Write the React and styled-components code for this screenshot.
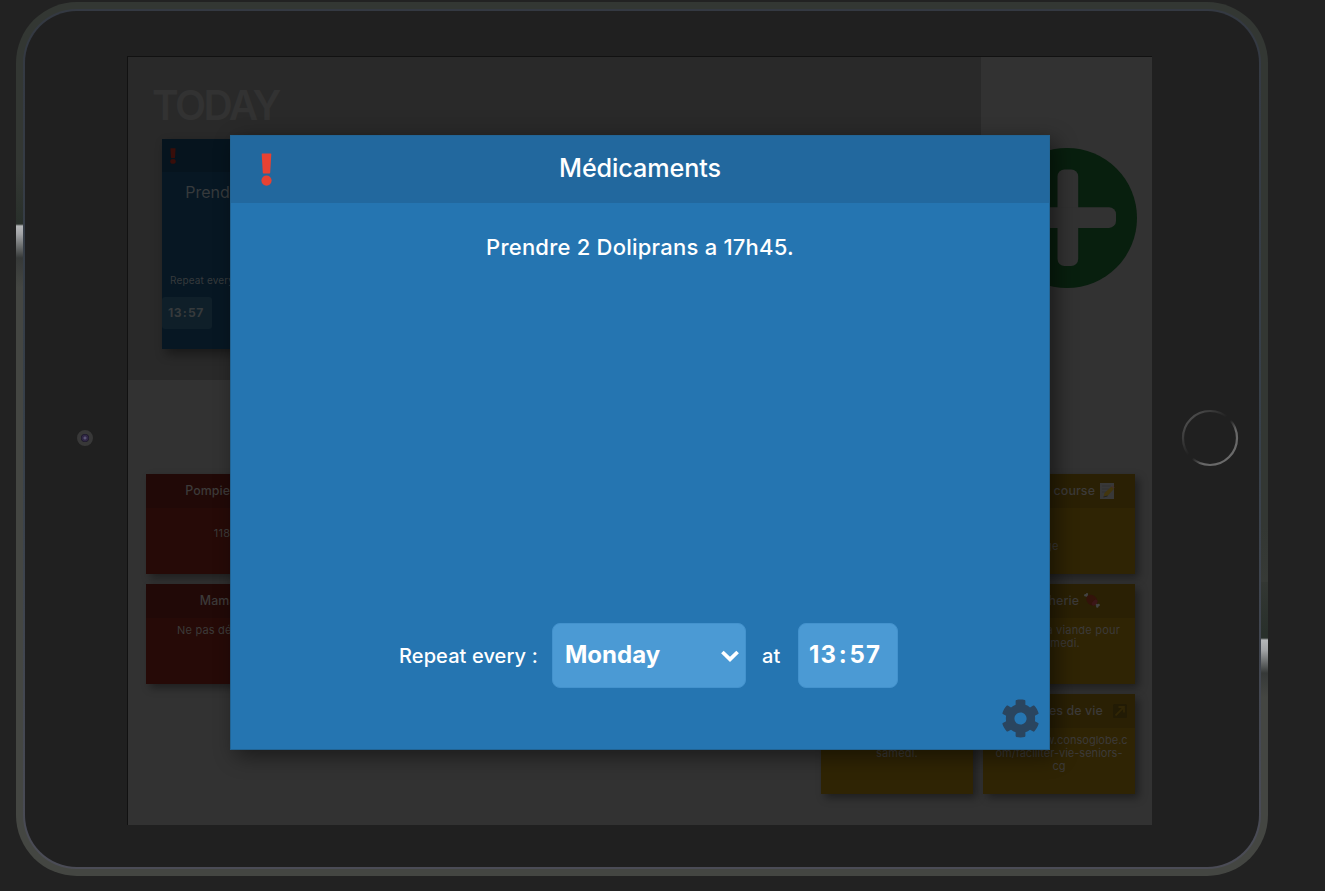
import React from "react";
import styled, { createGlobalStyle } from "styled-components";
import { FaCog } from "react-icons/fa";

const GlobalStyle = createGlobalStyle`
  * { box-sizing: border-box; }
  body {
    margin: 0;
    background: #222;
    font-family: Inter, "Liberation Sans", sans-serif;
    overflow: hidden;
  }
`;

const Page = styled.main`
  width: 1325px;
  height: 891px;
  padding: 2px 0 0 16px;
  background: #222;
`;

const Metal = styled.div`
  width: 1252px;
  height: 874px;
  padding: 7px;
  border-radius: 61px;
  background: linear-gradient(180deg, #333733 0%, #333733 60%, #444642 90%);
  position: relative;

  &::before,
  &::after {
    content: "";
    position: absolute;
    width: 7px;
  }
  &::before {
    left: 0;
    top: 170px;
    height: 620px;
    background: linear-gradient(180deg, #333733 0, #29302b 50px, #29302b 52px, #b5b7b9 54px, #a2a4a6 62px, #363938 86px, #444642 115px, #444642 100%);
  }
  &::after {
    right: 0;
    top: 580px;
    height: 210px;
    background: linear-gradient(180deg, #333733 0, #29302b 50px, #29302b 56px, #b5b7b9 58px, #a2a4a6 68px, #363938 91px, #444642 115px, #444642 100%);
  }
`;

const Bezel = styled.div`
  width: 1238px;
  height: 860px;
  border-radius: 54px;
  padding: 2px;
  background: linear-gradient(180deg, #343942 0%, #37404a 50%, #4b4c56 100%);
`;

const Glass = styled.div`
  width: 1234px;
  height: 856px;
  border-radius: 52px;
  background: #202020;
  display: grid;
  grid-template-columns: 102px 1025px 107px;
  padding-top: 45px;
  align-items: start;
`;

const CameraColumn = styled.div`
  height: 769px;
  padding-bottom: 6px;
  display: flex;
  align-items: center;
  justify-content: center;
  padding-left: 18px;
`;

const Camera = styled.div`
  width: 16px;
  height: 16px;
  border-radius: 50%;
  border: 4px solid #383838;
  background: radial-gradient(circle, #5a5475 0 0.8px, #302745 2px 3px, #171425 4px);
`;

const HomeColumn = styled(CameraColumn)`
  padding-left: 9px;
`;

const Screen = styled.div`
  position: relative;
  width: 1025px;
  height: 769px;
  border-top: 1px solid #111;
  border-left: 1px solid #111;
  background: #323232;
`;

const TopArea = styled.div`
  display: grid;
  grid-template-columns: 853px 171px;
  height: 323px;
`;

const TodayPanel = styled.section`
  background: #292929;
  padding: 25px 0 0 24px;
`;

const TodayTitle = styled.h1`
  margin: 0 0 9px;
  font-size: 40.5px;
  line-height: 48px;
  font-weight: 600;
  letter-spacing: -2.5px;
  color: #323232;
`;

const TodayNote = styled.article`
  width: 210px;
  height: 210px;
  margin-left: 10px;
  background: #071723;
  color: #363a3c;
  box-shadow: 4px 5px 10px rgba(0, 0, 0, 0.4);
`;

const TodayNoteHead = styled.div`
  height: 33px;
  padding: 9px 0 0 8px;
  background: #06141e;
`;

const TodayNoteText = styled.p`
  margin: 0;
  height: 92px;
  padding-top: 10px;
  text-align: center;
  font-size: 16px;
  line-height: 20px;
`;

const TodayRepeat = styled.div`
  height: 33px;
  padding: 10px 0 0 8px;
  font-size: 10px;
  letter-spacing: 0.15px;
  white-space: nowrap;
`;

const TodayTime = styled.div`
  width: 50px;
  height: 32px;
  border-radius: 3px;
  background: #0f1f29;
  display: flex;
  align-items: center;
  padding: 0 0 1px 6px;
  font-size: 12.2px;
  font-weight: 700;
  letter-spacing: 0.4px;
`;

const Colon = styled.span`
  padding: 0 0.07em;
`;

const AddArea = styled.aside`
  padding: 91px 0 0 16px;
`;

const Board = styled.section`
  display: flex;
  justify-content: space-between;
  padding: 94px 17px 0 18px;
`;

const Side = styled.div`
  display: flex;
  gap: 10px;
`;

const Stack = styled.div`
  display: grid;
  gap: 10px;
  align-self: ${(p) => (p.$end ? "flex-end" : "flex-start")};
`;

const tones = {
  red: { body: "#260a07", head: "#210907" },
  yellow: { body: "#2f2404", head: "#2a2004" },
};

const Note = styled.article`
  width: 152px;
  height: 100px;
  background: ${(p) => tones[p.$tone].body};
  box-shadow: 4px 4px 8px rgba(0, 0, 0, 0.38);
  color: #3c3a39;
  overflow: hidden;
`;

const NoteHead = styled.h2`
  margin: 0;
  height: 34px;
  padding-bottom: 1px;
  padding-right: ${(p) => p.$inset || 0}px;
  display: flex;
  align-items: center;
  justify-content: center;
  gap: ${(p) => p.$gap || 5}px;
  background: ${(p) => tones[p.$tone].head};
  font-size: 12.4px;
  font-weight: 500;
  letter-spacing: 0.1px;
  white-space: nowrap;
`;

const NoteText = styled.p`
  margin: 0;
  padding: ${(p) => 6 + (p.$skip || 0) * 13}px ${(p) => p.$right || 6}px 0 6px;
  text-align: center;
  font-size: 11px;
  line-height: 13px;
  letter-spacing: ${(p) => (p.$tight ? 0.02 : 0.2)}px;
  white-space: pre;
`;

const Dialog = styled.div`
  position: absolute;
  top: 78px;
  left: 102px;
  width: 820px;
  height: 615px;
  display: flex;
  flex-direction: column;
  border: 1px solid #226494;
  background: #2575b1;
  color: #fff;
  box-shadow: 6px 6px 20px rgba(0, 0, 0, 0.48);
`;

const DialogHead = styled.header`
  flex: 0 0 67px;
  display: grid;
  grid-template-columns: 70px 1fr 70px;
  align-items: center;
  background: #22689e;
`;

const BangSlot = styled.div`
  display: flex;
  padding-left: 30px;
`;

const DialogTitle = styled.h2`
  margin: 0;
  padding-bottom: 3px;
  text-align: center;
  font-size: 25.2px;
  line-height: 30px;
  font-weight: 450;
  letter-spacing: -0.1px;
`;

const DialogText = styled.p`
  margin: 0;
  padding-top: 30px;
  flex: 1;
  text-align: center;
  font-size: 22px;
  font-weight: 450;
  line-height: 28px;
  letter-spacing: 0.23px;
`;

const RepeatRow = styled.div`
  display: flex;
  align-items: center;
  height: 65px;
  padding-left: 168px;
  font-size: 20px;
  font-weight: 450;
  letter-spacing: 0.1px;
  white-space: nowrap;
`;

const RepeatLabel = styled.span`
  width: ${(p) => p.$width}px;
  padding: 1px 0 0 ${(p) => p.$left || 0}px;
`;

const Field = styled.div`
  width: ${(p) => p.$width}px;
  height: 65px;
  padding: 0 5px 2px ${(p) => p.$left}px;
  border: 1px solid #4392cd;
  border-radius: 8px;
  display: flex;
  align-items: center;
  justify-content: ${(p) => (p.$spread ? "space-between" : "flex-start")};
  background: #4b9ad4;
  font-size: 24px;
  font-weight: 700;
  letter-spacing: ${(p) => p.$spacing || 0}px;
`;

const DialogFoot = styled.footer`
  height: 61px;
  display: flex;
  justify-content: flex-end;
  padding: 11px 9px 0 0;
  color: #2a455f;
`;

const Bang = ({ width, height, color }) => (
  <svg width={width} height={height} viewBox="0 0 11 33" preserveAspectRatio="none" fill={color}>
    <path d="M1.2 0.5h8.6q.5 0 .5.6L9.2 19.8q0 .7-.7.7h-6q-.7 0-.7-.7L.7 1.1q0-.6.5-.6Z" />
    <circle cx="5.5" cy="27.6" r="5.1" />
  </svg>
);

const AddIcon = () => (
  <svg width="140" height="140" viewBox="0 0 140 140">
    <circle cx="70" cy="70" r="70" fill="#081f0e" />
    <rect x="60.5" y="21.5" width="20.7" height="96.5" rx="7" fill="#323232" />
    <rect x="22" y="59.2" width="97" height="20.7" rx="7" fill="#323232" />
  </svg>
);

const HomeIcon = () => (
  <svg width="58" height="58" viewBox="0 0 58 58" fill="none">
    <defs>
      <linearGradient id="home" x1="0.1" y1="0.1" x2="0.9" y2="0.9">
        <stop offset="0" stopColor="#505050" />
        <stop offset="0.45" stopColor="#202020" />
        <stop offset="0.53" stopColor="#202020" />
        <stop offset="0.7" stopColor="#666" />
        <stop offset="1" stopColor="#6c6c6c" />
      </linearGradient>
    </defs>
    <circle cx="29" cy="29" r="27" stroke="url(#home)" strokeWidth="2.2" />
  </svg>
);

const MemoIcon = () => (
  <svg width="15" height="16" viewBox="0 0 15 16">
    <rect width="14" height="16" fill="#383838" />
    <path d="M2 3h9M2 6h7M2 9h5" stroke="#303030" />
    <path d="m3.5 14 1-4 7-6.5 2.5 2.2-6.5 7.3Z" fill="#43360e" />
    <path d="m3.5 14 4-1" stroke="#222" />
    <path d="m11.5 3.5 1-1 2 1.8-.6 1.5Z" fill="#44302d" />
  </svg>
);

const MeatIcon = () => (
  <svg width="16" height="15" viewBox="0 0 16 15">
    <path d="m2 2 12 11" stroke="#434343" strokeWidth="1.8" />
    <circle cx="1.5" cy="2.2" r="1.3" fill="#434343" />
    <circle cx="3" cy="1.2" r="1.1" fill="#434343" />
    <circle cx="14.5" cy="12" r="1.3" fill="#434343" />
    <circle cx="13.3" cy="13.5" r="1.2" fill="#434343" />
    <ellipse cx="7.8" cy="7.1" rx="6" ry="4.8" transform="rotate(42 7.8 7.1)" fill="#33130a" />
    <ellipse cx="10.7" cy="9.7" rx="2.1" ry="3.5" transform="rotate(42 10.7 9.7)" fill="#3b1617" />
  </svg>
);

const LinkIcon = () => (
  <svg width="14" height="14" viewBox="0 0 14 14">
    <rect width="14" height="14" rx="1.5" fill="#221b05" />
    <path d="M2.5 11.5 10 4M5.5 3H11v5.5" stroke="#312606" strokeWidth="1.8" fill="none" />
  </svg>
);

const Chevron = () => (
  <svg width="20" height="14" viewBox="0 0 20 14" fill="none">
    <path d="m2.4 4 7.6 7.4L17.6 4" stroke="#fff" strokeWidth="3.7" />
  </svg>
);

const Clock = () => (
  <span>
    13<Colon>:</Colon>57
  </span>
);

function NoteCard({ tone, title, icon, gap, inset, text, skip, right, tight }) {
  return (
    <Note $tone={tone}>
      <NoteHead $tone={tone} $gap={gap} $inset={inset}>
        {title}
        {icon}
      </NoteHead>
      <NoteText $skip={skip} $right={right} $tight={tight}>{text}</NoteText>
    </Note>
  );
}

export default function App() {
  return (
    <Page>
      <GlobalStyle />
      <Metal>
        <Bezel>
          <Glass>
            <CameraColumn>
              <Camera />
            </CameraColumn>
            <Screen>
              <TopArea>
                <TodayPanel>
                  <TodayTitle>TODAY</TodayTitle>
                  <TodayNote>
                    <TodayNoteHead>
                      <Bang width={6} height={16} color="#380e0a" />
                    </TodayNoteHead>
                    <TodayNoteText>
                      Prendre 2 Doliprans a
                      <br />
                      17h45.
                    </TodayNoteText>
                    <TodayRepeat>Repeat every :</TodayRepeat>
                    <TodayTime>
                      <Clock />
                    </TodayTime>
                  </TodayNote>
                </TodayPanel>
                <AddArea>
                  <AddIcon />
                </AddArea>
              </TopArea>
              <Board>
                <Side>
                  <Stack>
                    <NoteCard tone="red" title="Pompiers" inset={17} text="118" skip={1} />
                    <NoteCard tone="red" title="Maman" text="Ne pas déranger" />
                  </Stack>
                </Side>
                <Side>
                  <Stack $end>
                    <NoteCard tone="yellow" title="Boucherie" text={"Acheter la viande pour\nsamedi."} />
                  </Stack>
                  <Stack>
                    <NoteCard tone="yellow" title="Liste de course" icon={<MemoIcon />} text="Fromage" skip={2} right={54} />
                    <NoteCard tone="yellow" title="Boucherie" icon={<MeatIcon />} text={"Acheter la viande pour\nsamedi."} />
                    <NoteCard
                      tone="yellow"
                      title="Les astuces de vie"
                      gap={10}
                      icon={<LinkIcon />}
                      text={"https://www.consoglobe.c\nom/faciliter-vie-seniors-\ncg"}
                      tight
                    />
                  </Stack>
                </Side>
              </Board>
              <Dialog role="dialog">
                <DialogHead>
                  <BangSlot>
                    <Bang width={11} height={33} color="#e74232" />
                  </BangSlot>
                  <DialogTitle>Médicaments</DialogTitle>
                </DialogHead>
                <DialogText>Prendre 2 Doliprans a 17h45.</DialogText>
                <RepeatRow>
                  <RepeatLabel $width={153}>Repeat every :</RepeatLabel>
                  <Field $width={194} $left={12} $spread>
                    Monday
                    <Chevron />
                  </Field>
                  <RepeatLabel $width={52} $left={16}>at</RepeatLabel>
                  <Field $width={100} $left={10} $spacing={1.1}>
                    <Clock />
                  </Field>
                </RepeatRow>
                <DialogFoot>
                  <FaCog size={39} />
                </DialogFoot>
              </Dialog>
            </Screen>
            <HomeColumn>
              <HomeIcon />
            </HomeColumn>
          </Glass>
        </Bezel>
      </Metal>
    </Page>
  );
}
